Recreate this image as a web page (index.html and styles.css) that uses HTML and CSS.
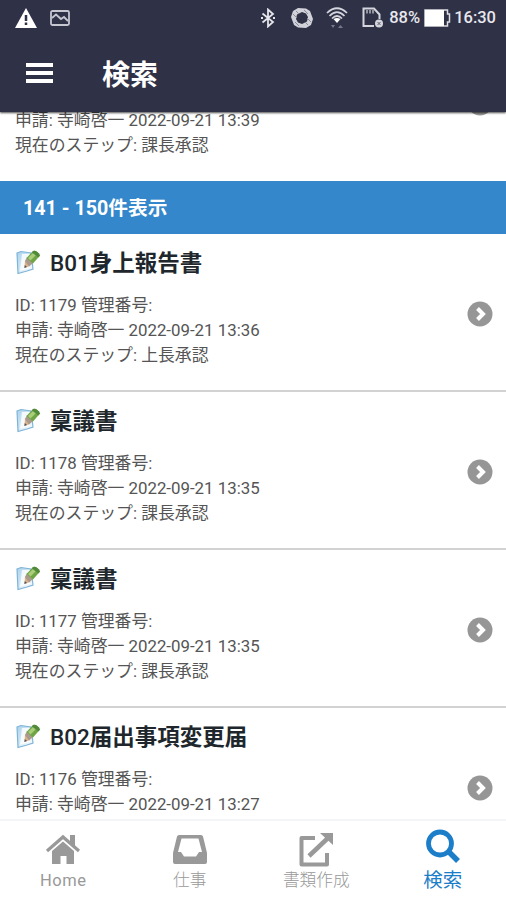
FILE: index.html
```html
<!doctype html>
<html lang="ja">
    <head>
        <meta charset="utf-8">
        <title>検索</title>
        <meta name="viewport" content="width=device-width, initial-scale=1">
        <link rel="stylesheet" href="styles.css">
    </head>
    <body>
        <!-- shared icons -->
        <svg class="defs" width="0" height="0">
            <linearGradient id="paper" x1="0" y1="0" x2="1" y2="1">
                <stop offset="0" stop-color="#a9d2ec" />
                <stop offset="1" stop-color="#fff" />
            </linearGradient>
            <symbol id="memo" viewBox="0 0 26 26">
                <path d="M2 4 6 2.500 16 4 18 20 12 22 3 24.500Z" fill="url(#paper)" stroke="#7fb4d8" stroke-width="1.200" />
                <path d="M7 5 15 5 15 19 5 22Z" fill="#fff" opacity=".8" />
                <path d="M10 11 15 17 9.500 19Z" fill="#d9b18c" />
                <path d="M9.800 16 12 18 9.300 19Z" fill="#555" />
                <path d="M10 12 12 8 18 14 14 17.500Z" fill="#a99a8c" />
                <path d="M11.500 9 18 2Q22 1 25 6.500L18 14.500Z" fill="#6fa545" />
                <path d="M13 9 19 3 21.500 5.500 15.500 11.500Z" fill="#a9cd78" />
                <path d="M18 2Q22 1 25 6.500L23.500 8.500 17 3.500Z" fill="#528a3c" />
            </symbol>
            <symbol id="go" viewBox="0 0 26 26">
                <circle cx="13" cy="13" r="12.500" fill="#969696" />
                <path d="M10.500 7.500 16 13 10.500 18.500" fill="none" stroke="#fff" stroke-width="4" />
            </symbol>
        </svg>

        <header>
            <div class="status">
                <svg class="warn" width="22" height="20" viewBox="0 0 22 20">
                    <path d="M11 0 22 20H0Z" fill="#fff" />
                    <path d="M11 7V13M11 14.500V17" stroke="#2f3146" stroke-width="2.500" />
                </svg>
                <svg class="photo" width="20" height="16" viewBox="0 0 20 16">
                    <rect x="1" y="1" width="18" height="14" rx="1.500" fill="none" stroke="#c5c6d0" stroke-width="1.800" />
                    <path d="M2 8 6 4.500 11 9 14 7 18 11" fill="none" stroke="#c5c6d0" stroke-width="1.800" />
                </svg>
                <svg class="bluetooth" width="14" height="20" viewBox="0 0 14 20">
                    <path d="M1.500 5.500 12 14 7 18.500V1.500L12 6 1.500 14.500" fill="none" stroke="#e4e4ea" stroke-width="1.800" />
                    <path d="M0 10H2M12 10H14" stroke="#e4e4ea" stroke-width="2" />
                </svg>
                <svg class="rotate" width="24" height="22" viewBox="0 0 24 22">
                    <path fill-rule="evenodd" d="M8 1 16 1.500 20 4 23 12 21 18 16 21 8 20.500 4 18 1 10 3 4ZM12 5 7 7.500 6 12 8 15.500 12 17 17 14.500 18 10 16 6.500Z" fill="#d0d1d9" />
                    <path d="M3 7 7 11M6 4 9 7M15 15 18 18M17 11 21 15M14 3 18 7M5 15 9 19" stroke="#8a8c9a" />
                </svg>
                <svg class="wifi" width="22" height="22" viewBox="0 0 22 22">
                    <path d="M1 6Q11-3.500 21 6M3.500 9Q11 1.500 18.500 9M6 11.500Q11 6.500 16 11.500" fill="none" stroke="#d5d6dd" stroke-width="1.700" />
                    <path d="M7.500 12Q11 10 14.500 12L11 16Z" fill="#fff" />
                    <path d="M5 18H9L7 21ZM12 21 14.500 18 17 21Z" fill="#777988" />
                </svg>
                <svg class="sim" width="22" height="21" viewBox="0 0 22 21">
                    <path d="M12 19H1.500V1.500H12L17.500 7.500V12" fill="none" stroke="#d5d6dd" stroke-width="2" />
                    <path d="M5 3V6.500M8 3V6.500M11 3V6.500" stroke="#b5b6c0" stroke-width="1.500" />
                    <circle cx="17" cy="16.500" r="4" fill="#d5d6dd" />
                    <path d="M15.500 15 18.500 18M18.500 15 15.500 18" stroke="#5a5c6c" />
                </svg>
                <span class="percent">88%</span>
                <svg class="battery" width="27" height="18" viewBox="0 0 27 18">
                    <path d="M1 1H23.500V5H25.500V13H23.500V17H1Z" fill="#2f3146" stroke="#dcdce2" stroke-width="1.500" />
                    <path d="M1 1H20V17H1Z" fill="#fff" />
                </svg>
                <span class="time">16:30</span>
            </div>
            <div class="toolbar">
                <div class="burger"><i></i><i></i><i></i></div>
                <h1>検索</h1>
            </div>
        </header>

        <main>
            <article class="item first">
                <p>申請: 寺崎啓一 2022-09-21 13:39</p>
                <p>現在のステップ: 課長承認</p>
                <svg class="go" width="26" height="26"><use href="#go" /></svg>
            </article>

            <div class="divider">141 - 150件表示</div>

            <article class="item">
                <h2><svg width="26" height="26"><use href="#memo" /></svg><span><b>B01</b>身上報告書</span></h2>
                <p>ID: 1179 管理番号:</p>
                <p>申請: 寺崎啓一 2022-09-21 13:36</p>
                <p>現在のステップ: 上長承認</p>
                <svg class="go" width="26" height="26"><use href="#go" /></svg>
            </article>

            <article class="item">
                <h2><svg width="26" height="26"><use href="#memo" /></svg><span>稟議書</span></h2>
                <p>ID: 1178 管理番号:</p>
                <p>申請: 寺崎啓一 2022-09-21 13:35</p>
                <p>現在のステップ: 課長承認</p>
                <svg class="go" width="26" height="26"><use href="#go" /></svg>
            </article>

            <article class="item">
                <h2><svg width="26" height="26"><use href="#memo" /></svg><span>稟議書</span></h2>
                <p>ID: 1177 管理番号:</p>
                <p>申請: 寺崎啓一 2022-09-21 13:35</p>
                <p>現在のステップ: 課長承認</p>
                <svg class="go" width="26" height="26"><use href="#go" /></svg>
            </article>

            <article class="item">
                <h2><svg width="26" height="26"><use href="#memo" /></svg><span><b>B02</b>届出事項変更届</span></h2>
                <p>ID: 1176 管理番号:</p>
                <p>申請: 寺崎啓一 2022-09-21 13:27</p>
                <svg class="go" width="26" height="26"><use href="#go" /></svg>
            </article>
        </main>

        <nav>
            <a class="home">
                <svg width="36" height="36" viewBox="0 0 36 36">
                    <path d="M2 20 18 6 34 20" fill="none" stroke="currentColor" stroke-width="3.200" />
                    <path d="M25 4H30V16L25 11.500Z" fill="currentColor" />
                    <path d="M7 20 18 10.500 29 20V33H21.500V25H15.500V33H7Z" fill="currentColor" />
                </svg>
                <span>Home</span>
            </a>
            <a>
                <svg width="36" height="36" viewBox="0 0 36 36">
                    <path fill-rule="evenodd" d="M7 4H29Q30.500 4 31 5.500L35 22V31Q35 33 33 33H3Q1 33 1 31V22L5 5.500Q5.500 4 7 4ZM9.500 7.500 6 21H9L12 25.500H24L27 21H30L26.500 7.500Z" fill="currentColor" />
                </svg>
                <span>仕事</span>
            </a>
            <a>
                <svg width="36" height="36" viewBox="0 0 36 36">
                    <path d="M17 7H3.500V33.500H29V22" fill="none" stroke="currentColor" stroke-width="4" stroke-linejoin="round" />
                    <path d="M11 25 30 7" stroke="currentColor" stroke-width="4.500" />
                    <path d="M22 2H35V14Z" fill="currentColor" />
                </svg>
                <span>書類作成</span>
            </a>
            <a class="active">
                <svg width="36" height="36" viewBox="0 0 36 36">
                    <circle cx="15" cy="14.500" r="11.500" fill="none" stroke="currentColor" stroke-width="4.800" />
                    <path d="M23 22 33 32" stroke="currentColor" stroke-width="5.500" />
                </svg>
                <span>検索</span>
            </a>
        </nav>
    </body>
</html>
```

FILE: styles.css
```css
html, body {
    margin: 0;
    height: 100%;
    overflow: hidden;
    font-family: Roboto, "Noto Sans CJK JP", sans-serif;
}

body {
    display: flex;
    flex-direction: column;
    background: #fff;
    color: #555;
}

h1, h2, p {
    margin: 0;
}

svg {
    display: block;
    flex: none;
}

.defs {
    height: 0;
}

header {
    flex: none;
    height: 112px;
    background: #2f3146;
    color: #fff;
    box-shadow: 0 1px 2px rgba(0, 0, 0, .7);
    position: relative;
    z-index: 1;
}

.status {
    display: flex;
    align-items: center;
    height: 35px;
    padding: 0 10px 0 15px;
    color: #e8e8ee;
    font-size: 17px;
}

.photo {
    margin-left: 13px;
}

.bluetooth {
    margin-left: auto;
}

.rotate {
    margin-left: 15px;
}

.wifi {
    margin-left: 12px;
}

.sim {
    margin-left: 14px;
}

.percent {
    margin: 0 4px 0 5px;
    font-size: 16.5px;
    font-weight: 500;
}

.time {
    margin-left: 3px;
    font-weight: 500;
    font-size: 16.5px;
}

.toolbar {
    display: flex;
    align-items: center;
    height: 77px;
    padding-left: 26px;
}

.burger {
    display: flex;
    flex-direction: column;
    gap: 4px;
    width: 27px;
    margin-bottom: 1px;
}

.burger i {
    height: 4px;
    background: #fff;
}

h1 {
    margin: 4px 0 0 49px;
    font-size: 28px;
    line-height: 40px;
    font-weight: 700;
}

main {
    flex: 1;
    min-height: 0;
    overflow: hidden;
}

.item {
    position: relative;
    box-sizing: border-box;
    height: 158px;
    padding: 10px 15px 0;
    border-bottom: 2px solid #d2d2d2;
}

/* scrolled under the header */
.item.first {
    height: 73px;
    padding-top: 0;
    margin-top: -4px;
    border-bottom: none;
}

.item.first .go {
    top: -18px;
}

.item h2 {
    display: flex;
    align-items: center;
    gap: 9px;
    height: 34px;
    margin-bottom: 14.6px;
    color: #20272c;
    font-size: 22.5px;
    font-weight: 700;
}

.item h2 b {
    font-weight: 500;
}

.item h2 svg {
    margin-bottom: -1px;
}

.item p {
    font-size: 16.85px;
    line-height: 25.3px;
    white-space: nowrap;
}

.go {
    position: absolute;
    right: 13px;
    top: 67px;
}

.divider {
    height: 53px;
    padding-left: 23px;
    background: #3487cb;
    color: #fff;
    font-size: 19.7px;
    font-weight: 700;
    line-height: 55px;
}

nav {
    flex: none;
    display: grid;
    grid-template-columns: repeat(4, 1fr);
    box-sizing: border-box;
    height: 81px;
    padding-top: 10px;
    border-top: 2px solid #f4f5f6;
    background: #fff;
}

nav a {
    display: flex;
    flex-direction: column;
    align-items: center;
    color: #999;
    font-size: 16.7px;
}

nav span {
    margin-top: 2px;
    line-height: 24px;
    font-weight: 300;
}

nav .home span {
    font-weight: 400;
    font-size: 16.5px;
    letter-spacing: .5px;
}

nav .active {
    color: #1c7dc8;
    font-size: 19.5px;
}

nav .active svg {
    margin-top: -2px;
    margin-bottom: 2px;
}

nav .active span {
    font-weight: 400;
}
```
